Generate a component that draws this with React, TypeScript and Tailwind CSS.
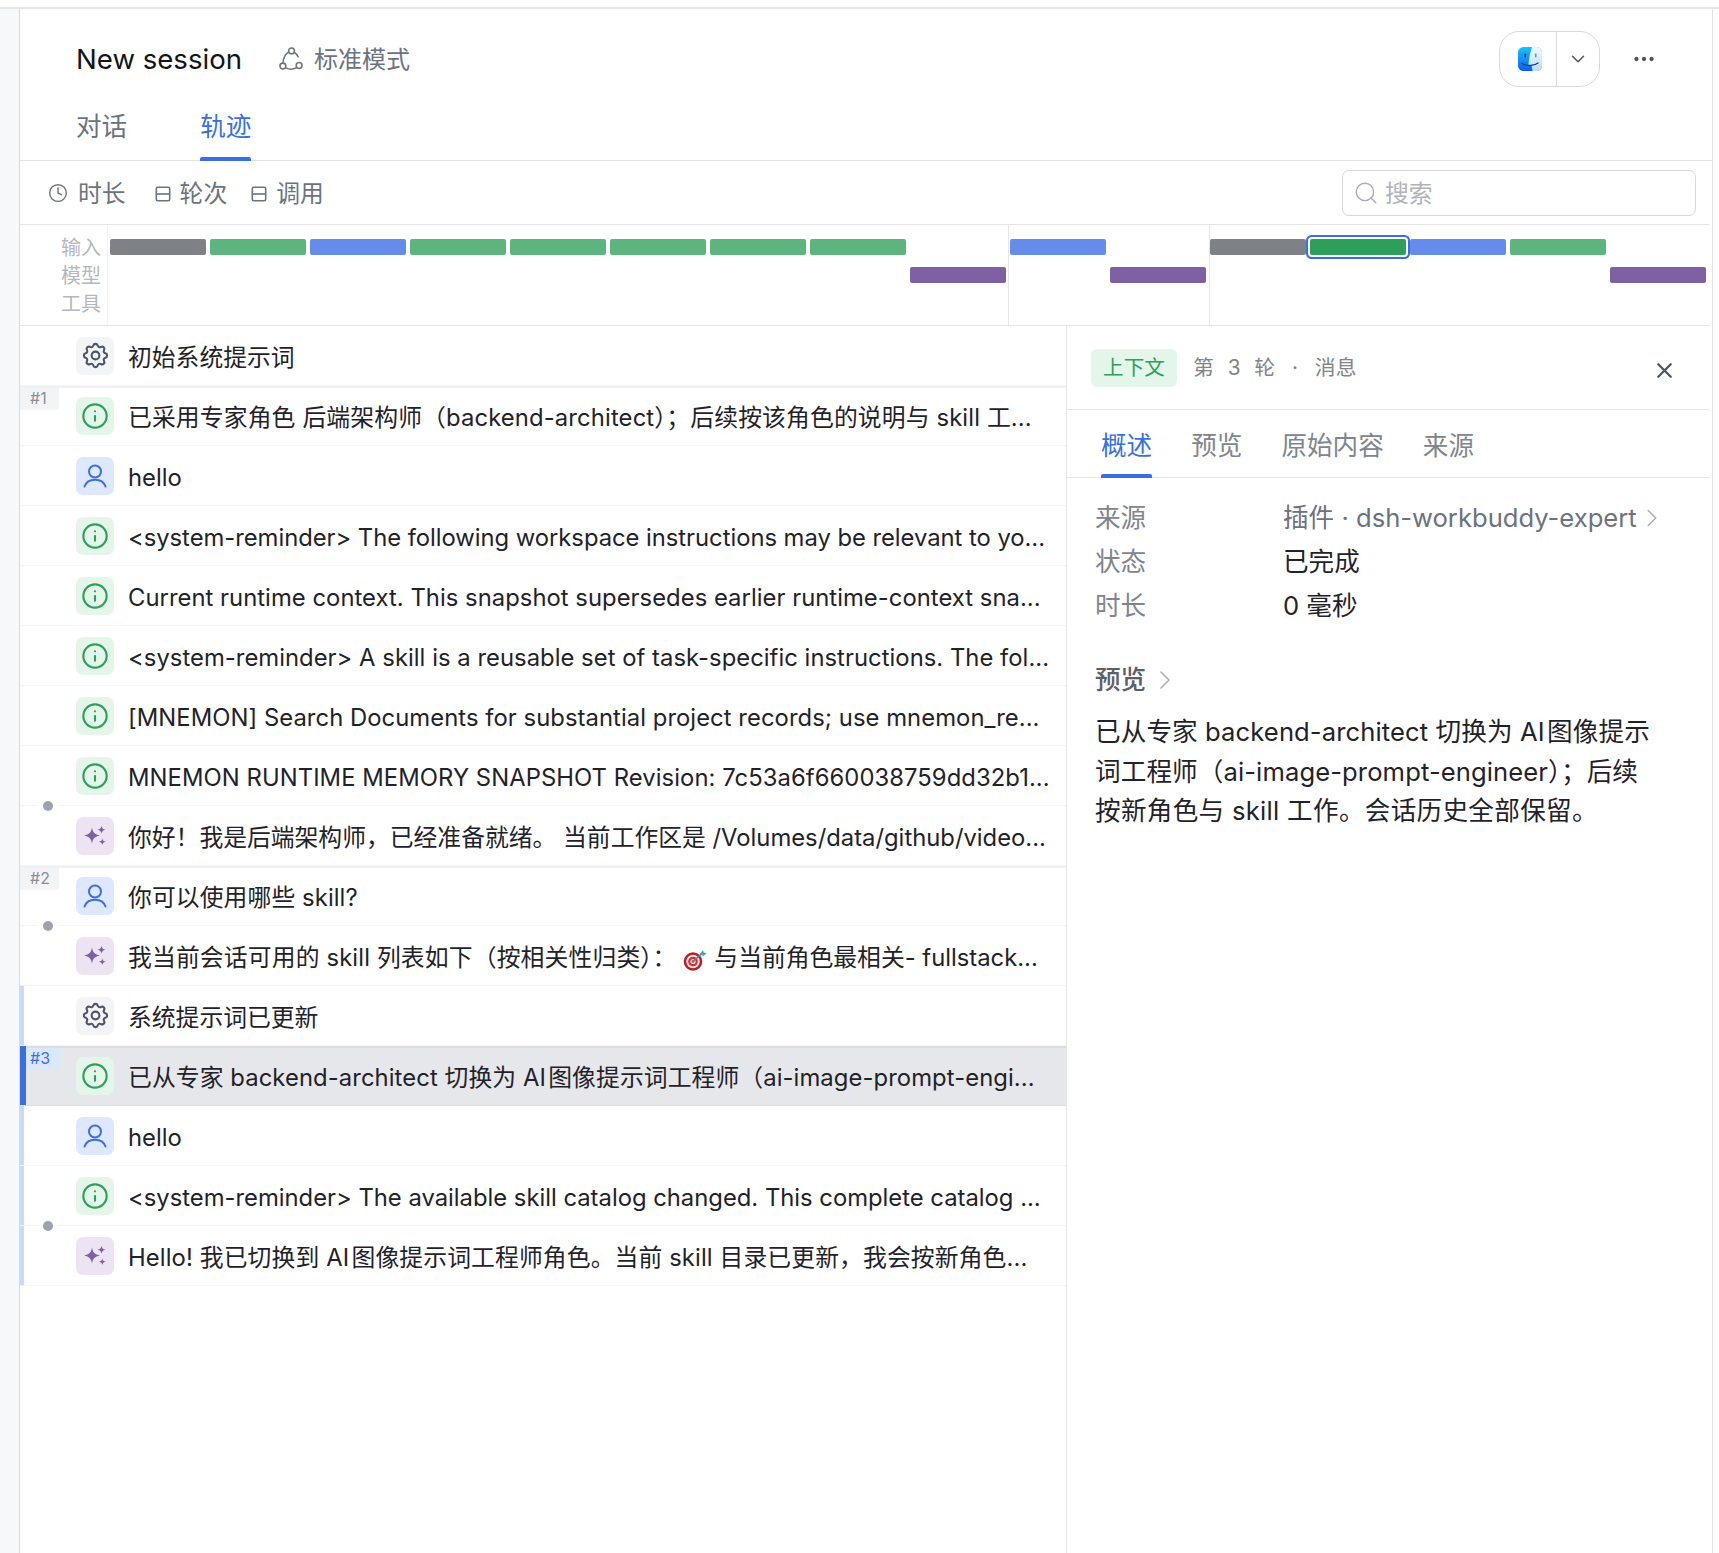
import { ChevronDown, ChevronRight, Clock, Ellipsis, Info, Search, X } from "lucide-react";
import { TbSettings } from "react-icons/tb";

type RowKind = "system" | "info" | "user" | "assistant";

interface Row {
  kind: RowKind;
  text: React.ReactNode;
  track?: string;
  turn?: string;
  dot?: boolean;
  accent?: boolean;
  selected?: boolean;
}

function Sparkle() {
  return (
    <svg width="38" height="38" viewBox="0 0 38 38" fill="currentColor">
      <path d="M16 10.500c.9 5 2.700 7 8 8-5.300 1-7.100 3-8 8-.9-5-2.700-7-8-8 5.300-1 7.100-3 8-8z" />
      <path d="M25.500 8.700c.4 2.500 1.400 3.500 4 4-2.600.5-3.600 1.500-4 4-.4-2.500-1.400-3.500-4-4 2.600-.5 3.600-1.500 4-4z" />
      <path d="M26.300 21.300c.3 2.200 1.200 3 3.400 3.400-2.200.4-3.100 1.200-3.400 3.400-.3-2.200-1.200-3-3.400-3.400 2.200-.4 3.100-1.200 3.400-3.400z" />
    </svg>
  );
}

function UserIcon() {
  return (
    <svg width="38" height="38" viewBox="0 0 38 38" fill="none" stroke="currentColor" strokeWidth="2" strokeLinecap="round">
      <circle cx="19" cy="14.500" r="6" />
      <path d="M8.500 29.500c1.500-4.500 5.500-6.800 10.500-6.800s9 2.300 10.500 6.800" />
    </svg>
  );
}

function DartEmoji() {
  return (
    <svg width="24" height="22" viewBox="0 0 24 22" className="ml-[6.5px] mr-[7.5px] inline-block align-[-5px]">
      <circle cx="10" cy="12.500" r="9.300" fill="#b3202a" />
      <circle cx="10" cy="12.500" r="6.800" fill="#f4e4e0" />
      <circle cx="10" cy="12.500" r="4.800" fill="#d0303a" />
      <circle cx="10" cy="12.500" r="2.600" fill="#f4e4e0" />
      <circle cx="10" cy="12.500" r="1.200" fill="#d0303a" />
      <path d="M10 12.500 19 4.500" stroke="#5f7d8c" strokeWidth="1.600" />
      <path d="M17 4.500 20 1l.7 2.600 3 .7-3.600 3z" fill="#3fa9bd" />
    </svg>
  );
}

function FinderIcon() {
  return (
    <svg width="26" height="26" viewBox="0 0 26 26">
      <defs>
        <linearGradient id="finderLeft" x1="0" y1="0" x2="0" y2="1">
          <stop offset="0" stopColor="#19c3fb" />
          <stop offset="1" stopColor="#0a5ef0" />
        </linearGradient>
        <linearGradient id="finderRight" x1="0" y1="0" x2="0" y2="1">
          <stop offset="0" stopColor="#eef9fe" />
          <stop offset="1" stopColor="#bcdcf8" />
        </linearGradient>
        <clipPath id="finderClip">
          <rect x="1" y="1" width="24" height="24" rx="5.500" />
        </clipPath>
      </defs>
      <g clipPath="url(#finderClip)">
        <rect x="1" y="1" width="24" height="24" fill="url(#finderLeft)" />
        <path d="M15 1h10v24h-9.500c-.5-2-.8-4-.8-6.200H11.500C11.800 11.500 13.500 6 15 1z" fill="url(#finderRight)" />
        <path d="M4.500 17c4.500 3.500 12 3.500 17-.3" fill="none" stroke="#123a78" strokeWidth="1.100" />
        <rect x="7.500" y="7.500" width="1.500" height="4" rx=".7" fill="#123a78" />
        <rect x="18" y="7.500" width="1.500" height="4" rx=".7" fill="#6f8db0" />
      </g>
    </svg>
  );
}

function ModeIcon() {
  return (
    <svg width="26" height="26" viewBox="0 0 24 24" fill="none" stroke="#6b7280" strokeWidth="1.400">
      <circle cx="12.500" cy="4.500" r="2.700" />
      <circle cx="4.500" cy="18.500" r="2.700" />
      <circle cx="19.500" cy="18" r="2.700" />
      <path d="M9.800 5.500C6.800 7.800 4.800 11.500 4.500 15.800" />
      <path d="M15.200 6c1.600 1 3 2.600 3.800 4.700" />
      <path d="M7.200 20.200c3 1.500 6.800 1.600 9.800-.2" />
    </svg>
  );
}

function GroupIcon() {
  return (
    <svg width="16" height="16" viewBox="0 0 16 16" fill="none" stroke="#6b7280" strokeWidth="1.600">
      <rect x="1.300" y="1.300" width="13.400" height="13.400" rx="1.500" />
      <path d="M1.300 8h13.400" />
    </svg>
  );
}

const tiles: Record<RowKind, { tile: string; icon: React.ReactNode }> = {
  system: { tile: "bg-[#f3f4f6] text-[#4b5563]", icon: <TbSettings size={31} strokeWidth={1.6} /> },
  info: { tile: "bg-[#e3f6e9] text-[#2e9e5b]", icon: <Info size={28} strokeWidth={1.8} /> },
  user: { tile: "bg-[#dde8fd] text-[#3b6fe0]", icon: <UserIcon /> },
  assistant: { tile: "bg-[#ece4f2] text-[#7f5fa5]", icon: <Sparkle /> },
};

const rows: Row[] = [
  { kind: "system", text: "初始系统提示词" },
  { kind: "info", turn: "#1", track: "tracking-[0.14px]", text: "已采用专家角色 后端架构师（backend-architect）；后续按该角色的说明与 skill 工..." },
  { kind: "user", text: "hello" },
  { kind: "info", track: "tracking-[-0.03px]", text: "<system-reminder> The following workspace instructions may be relevant to yo..." },
  { kind: "info", track: "tracking-[0.04px]", text: "Current runtime context. This snapshot supersedes earlier runtime-context sna..." },
  { kind: "info", track: "tracking-[0.04px]", text: "<system-reminder> A skill is a reusable set of task-specific instructions. The fol..." },
  { kind: "info", track: "tracking-[0.06px]", text: "[MNEMON] Search Documents for substantial project records; use mnemon_re..." },
  { kind: "info", track: "tracking-[0.07px]", text: "MNEMON RUNTIME MEMORY SNAPSHOT Revision: 7c53a6f660038759dd32b1..." },
  { kind: "assistant", dot: true, text: "你好！我是后端架构师，已经准备就绪。 当前工作区是 /Volumes/data/github/video..." },
  { kind: "user", turn: "#2", track: "tracking-[0.1px]", text: "你可以使用哪些 skill?" },
  {
    kind: "assistant",
    dot: true,
    text: (
      <>
        <span className="tracking-[0.15px]">我当前会话可用的 skill 列表如下（按相关性归类）：</span>
        <DartEmoji />
        与当前角色最相关- fullstack...
      </>
    ),
  },
  { kind: "system", accent: true, text: "系统提示词已更新" },
  { kind: "info", turn: "#3", accent: true, selected: true, track: "tracking-[0.09px]", text: "已从专家 backend-architect 切换为 AI\u200a图像提示词工程师（ai-image-prompt-engi..." },
  { kind: "user", accent: true, text: "hello" },
  { kind: "info", accent: true, text: "<system-reminder> The available skill catalog changed. This complete catalog ..." },
  { kind: "assistant", accent: true, dot: true, track: "tracking-[0.12px]", text: "Hello! 我已切换到 AI\u200a图像提示词工程师角色。当前 skill 目录已更新，我会按新角色..." },
];

const barColors = {
  gray: "bg-[#7e8185]",
  green: "bg-[#5eb47f]",
  blue: "bg-[#648ce8]",
  purple: "bg-[#7f60a3]",
  active: "z-10 bg-[#2e9e5b] shadow-[0_0_0_2px_#fff,0_0_0_4px_#3b6fe0]",
};

type Bar = [keyof typeof barColors, number, number];

const groups: { className: string; bars: Bar[] }[] = [
  {
    className: "border-r border-[#e5e7eb] pl-[2px] pr-[2px]",
    bars: [
      ["gray", 1, 1],
      ["green", 2, 1],
      ["blue", 3, 1],
      ["green", 4, 1],
      ["green", 5, 1],
      ["green", 6, 1],
      ["green", 7, 1],
      ["green", 8, 1],
      ["purple", 9, 2],
    ],
  },
  {
    className: "border-r border-[#e5e7eb] pl-[1px] pr-[3px]",
    bars: [
      ["blue", 1, 1],
      ["purple", 2, 2],
    ],
  },
  {
    className: "",
    bars: [
      ["gray", 1, 1],
      ["active", 2, 1],
      ["blue", 3, 1],
      ["green", 4, 1],
      ["purple", 5, 2],
    ],
  },
];

function TraceRow({ row }: { row: Row }) {
  const tile = tiles[row.kind];
  return (
    <div
      className={`relative flex h-[60px] items-center border-b pl-[56px] ${
        row.selected ? "border-[#dcdde0] bg-[#e6e7ea] shadow-[inset_0_2px_0_#dcdde0]" : "border-[#f3f4f6]"
      } ${row.turn && !row.selected ? "shadow-[inset_0_2px_0_#eff0f1]" : ""}`}
    >
      {row.accent && (
        <span className={`absolute inset-y-0 left-0 ${row.selected ? "w-[6px] bg-[#3b6fe0]" : "w-[4px] bg-[#c9d9fb]"}`} />
      )}
      {row.dot && <span className="absolute -top-[5px] left-[23px] z-10 size-[10px] rounded-full bg-[#9ca3af] ring-[5px] ring-white" />}
      {row.turn && (
        <span
          className={`absolute top-[2px] h-[22px] rounded-br-[4px] text-[16px] leading-[20px] ${
            row.selected ? "left-[6px] w-[33px] bg-[#dbe7fc] pl-[4px] text-[#3b6fe0]" : "left-0 w-[39px] bg-[#f3f4f6] pl-[10px] text-[#8a8f96]"
          }`}
        >
          {row.turn}
        </span>
      )}
      <span className={`flex size-[38px] shrink-0 items-center justify-center rounded-[7px] ${tile.tile}`}>{tile.icon}</span>
      <span className={`ml-[14px] whitespace-nowrap pt-[4px] text-[23.8px] text-[#1f2329] ${row.track ?? ""}`}>{row.text}</span>
    </div>
  );
}

export default function App() {
  return (
    <div className="h-[1553px] w-full overflow-hidden bg-white font-['Inter','Noto_Sans_CJK_SC',sans-serif]">
      <div className="mt-[7px] h-[2px] bg-[#e5e5e5]" />
      <div className="flex h-[1544px]">
        <aside className="w-[20px] shrink-0 border-r border-[#d9dadc] bg-[#f7f8fa]" />
        <main className="flex w-[1693px] flex-col border-r border-[#e0e1e3]">
          <header className="flex h-[100px] shrink-0 items-center pl-[56px] pr-[55px]">
            <h1 className="mt-[2px] text-[27.6px] font-normal text-[#111418]">New session</h1>
            <div className="ml-[36px] flex items-center gap-[10px] text-[24px] text-[#6b7280]">
              <ModeIcon />
              <span className="mt-[2px]">标准模式</span>
            </div>
            <div className="ml-auto flex h-[56px] w-[101px] items-stretch rounded-[20px] border border-[#d9d9d9]">
              <span className="flex w-[57px] items-center justify-center border-r border-[#d9d9d9] pl-[3px]">
                <FinderIcon />
              </span>
              <span className="flex flex-1 items-center justify-center text-[#4b5563]">
                <ChevronDown size={22} strokeWidth={1.6} />
              </span>
            </div>
            <Ellipsis size={26} className="ml-[31px] text-[#4b5563]" />
          </header>

          <nav className="flex h-[52px] shrink-0 gap-[73px] border-b border-[#e2e3e5] pl-[56px] text-[25.6px]">
            <span className="pt-[1px] leading-[34px] text-[#6b7280]">对话</span>
            <span className="relative pt-[1px] leading-[34px] text-[#3b6fe0]">
              轨迹
              <span className="absolute inset-x-0 -bottom-px h-[4px] rounded-t-[2px] bg-[#3b6fe0]" />
            </span>
          </nav>

          <div className="mr-[3px] flex min-h-0 flex-1 flex-col">
            <div className="flex h-[64px] shrink-0 items-center border-b border-[#e5e6e8] pl-[28px] pr-[13px] text-[23.8px] text-[#6b7280]">
              <Clock size={20} strokeWidth={1.7} />
              <span className="ml-[10px] pt-[3px]">时长</span>
              <span className="ml-[29px] pt-[2px]">
                <GroupIcon />
              </span>
              <span className="ml-[9px] pt-[3px]">轮次</span>
              <span className="ml-[24px] pt-[2px]">
                <GroupIcon />
              </span>
              <span className="ml-[9px] pt-[3px]">调用</span>
              <label className="ml-auto flex h-[46px] w-[354px] items-center rounded-[7px] border border-[#d6d8dc] pl-[10px]">
                <Search size={26} strokeWidth={1.3} className="shrink-0 text-[#a9adb3]" />
                <input placeholder="搜索" className="ml-[6px] w-full bg-transparent pt-[3px] outline-none placeholder:text-[#b0b4ba]" />
              </label>
            </div>

            <div className="flex h-[101px] shrink-0 border-b border-[#e5e6e8]">
              <div className="w-[88px] shrink-0 border-r border-[#f3f4f6] pr-[6px] pt-[9px] text-right text-[20px] leading-[28px] text-[#b4b8bd]">
                <div>输入</div>
                <div>模型</div>
                <div>工具</div>
              </div>
              {groups.map((group, i) => (
                <div key={i} className={`grid auto-cols-[96px] auto-rows-[16px] content-start gap-x-1 gap-y-3 pt-[14px] ${group.className}`}>
                  {group.bars.map(([color, col, row]) => (
                    <span key={col} className={`rounded-[2px] ${barColors[color]}`} style={{ gridColumn: col, gridRow: row }} />
                  ))}
                </div>
              ))}
            </div>

            <div className="flex min-h-0 flex-1">
              <section className="w-[1047px] shrink-0 border-r border-[#e5e6e8]">
                {rows.map((row, i) => (
                  <TraceRow key={i} row={row} />
                ))}
              </section>

              <section className="min-w-0 flex-1">
                <div className="flex h-[84px] items-center border-b border-[#e5e6e8] pl-[24px] pr-[36px]">
                  <span className="flex h-[38px] w-[86px] items-center justify-center rounded-[6px] bg-[#e3f6e9] pt-[2px] text-[20.6px] text-[#2e9e5b]">上下文</span>
                  <span className="ml-[16px] text-[20.8px] text-[#80858c] [word-spacing:8px]">
                    第 3 轮 <span className="mx-[3px]">·</span> 消息
                  </span>
                  <X size={25} strokeWidth={2.2} className="-mr-[4px] ml-auto mt-[6px] text-[#4b5563]" />
                </div>

                <div className="flex h-[68px] gap-[39px] border-b border-[#e5e6e8] pl-[34px] text-[25.6px] text-[#80858c]">
                  <span className="relative pt-[16px] leading-[40px] text-[#3b6fe0]">
                    概述
                    <span className="absolute inset-x-0 -bottom-px h-[4px] rounded-t-[2px] bg-[#3b6fe0]" />
                  </span>
                  <span className="pt-[16px] leading-[40px]">预览</span>
                  <span className="pt-[16px] leading-[40px]">原始内容</span>
                  <span className="pt-[16px] leading-[40px]">来源</span>
                </div>

                <div className="pl-[28px] pt-[18px] text-[25.6px]">
                  <dl className="grid grid-cols-[188px_1fr] auto-rows-[44px] items-center">
                    <dt className="text-[#80858c]">来源</dt>
                    <dd className="flex items-center text-[#6b7280]">
                      插件 · dsh-workbuddy-expert
                      <ChevronRight size={30} strokeWidth={1.2} className="text-[#a9adb3]" />
                    </dd>
                    <dt className="text-[#80858c]">状态</dt>
                    <dd className="text-[#1f2329]">已完成</dd>
                    <dt className="text-[#80858c]">时长</dt>
                    <dd className="text-[#1f2329]">0 毫秒</dd>
                  </dl>

                  <div className="mt-[32px] flex h-[40px] items-center font-medium text-[#5b6068]">
                    预览
                    <ChevronRight size={32} strokeWidth={1.2} className="ml-[3px] text-[#a9adb3]" />
                  </div>
                  <p className="mt-[12px] whitespace-nowrap leading-[39.5px] text-[#1f2329]">
                    <span className="tracking-[0.1px]">已从专家 backend-architect 切换为 AI{"\u200a"}图像提示</span>
                    <br />
                    <span className="tracking-[0.1px]">词工程师（ai-image-prompt-engineer）；后续</span>
                    <br />
                    <span className="tracking-[0.3px]">按新角色与 skill 工作。会话历史全部保留。</span>
                  </p>
                </div>
              </section>
            </div>
          </div>
        </main>
      </div>
    </div>
  );
}
